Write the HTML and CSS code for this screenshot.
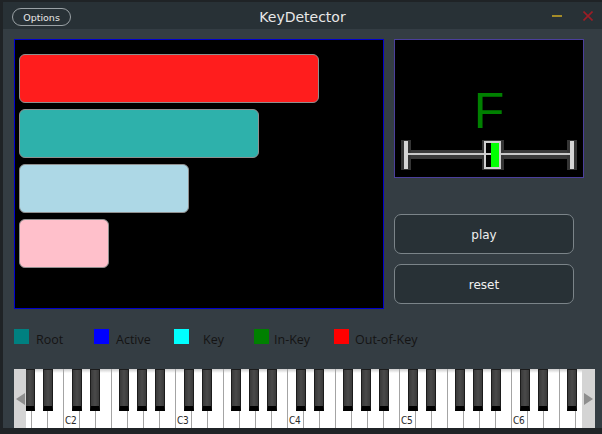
FILE: index.html
```html
<!DOCTYPE html>
<html>
<head>
<meta charset="utf-8">
<title>KeyDetector</title>
<link rel="stylesheet" href="styles.css">
</head>
<body>
<div class="window">
  <div class="titlebar">
    <div class="opt">Options</div>
    <div class="title">KeyDetector</div>
    <div class="wctl">
      <span class="min"></span>
      <svg class="close" width="10" height="10" viewBox="0 0 10 10"><path d="M0.5 0.5L9.5 9.5M9.5 0.5L0.5 9.5" stroke="#9c1d26" stroke-width="1.6" fill="none"/></svg>
    </div>
  </div>
  <div class="main">
    <div class="top">
      <div class="bars">
        <div class="bar red" style="width:300px"></div>
        <div class="bar teal" style="width:240px"></div>
        <div class="bar lblue" style="width:170px"></div>
        <div class="bar pink" style="width:90px"></div>
      </div>
      <div class="side">
        <div class="note">
          <div class="letter">F</div>
          <svg class="slider" width="188" height="30" viewBox="0 0 188 30">
            <rect x="13" y="10" width="162" height="9" fill="#3a3a3a"/>
            <rect x="6" y="0" width="10" height="30" fill="#353535"/>
            <rect x="172" y="0" width="10" height="30" fill="#353535"/>
            <rect x="87" y="0" width="22" height="30" fill="#353535"/>
            <rect x="91" y="3" width="13" height="24" fill="#000"/>
            <rect x="13" y="13" width="162" height="2" fill="#c8c8c8"/>
            <rect x="9" y="1" width="4" height="28" fill="#d6d6d6"/>
            <rect x="175" y="1" width="4" height="28" fill="#d6d6d6"/>
            <rect x="96" y="2" width="8" height="26" fill="#00ff00"/>
            <rect x="90" y="2" width="15" height="26" fill="none" stroke="#cfcfcf" stroke-width="2"/>
          </svg>
        </div>
        <div class="btn play">play</div>
        <div class="btn reset">reset</div>
      </div>
    </div>
    <div class="legend">
      <div class="item"><span class="sq root"></span><span class="lab">Root</span></div>
      <div class="item"><span class="sq active"></span><span class="lab">Active</span></div>
      <div class="item"><span class="sq key"></span><span class="lab lab-key">Key</span></div>
      <div class="item"><span class="sq inkey"></span><span class="lab lab-in">In-Key</span></div>
      <div class="item"><span class="sq outkey"></span><span class="lab lab-out">Out-of-Key</span></div>
    </div>
    <div class="kb">
      <div class="arr"><svg width="9" height="12" viewBox="0 0 9 12"><path d="M0 6L9 0V12Z" fill="#8e8e8e"/></svg></div>
      <div class="keys">
        <div class="keys-in">
          <div class="wk"><span class="bk g"></span></div>
          <div class="wk"><span class="bk a"></span></div>
          <div class="wk"></div>

          <div class="wk"><span class="bk c"></span><span class="lbl">C2</span></div>
          <div class="wk"><span class="bk d"></span></div>
          <div class="wk"></div>
          <div class="wk"><span class="bk f"></span></div>
          <div class="wk"><span class="bk g"></span></div>
          <div class="wk"><span class="bk a"></span></div>
          <div class="wk"></div>

          <div class="wk"><span class="bk c"></span><span class="lbl">C3</span></div>
          <div class="wk"><span class="bk d"></span></div>
          <div class="wk"></div>
          <div class="wk"><span class="bk f"></span></div>
          <div class="wk"><span class="bk g"></span></div>
          <div class="wk"><span class="bk a"></span></div>
          <div class="wk"></div>

          <div class="wk"><span class="bk c"></span><span class="lbl">C4</span></div>
          <div class="wk"><span class="bk d"></span></div>
          <div class="wk"></div>
          <div class="wk"><span class="bk f"></span></div>
          <div class="wk"><span class="bk g"></span></div>
          <div class="wk"><span class="bk a"></span></div>
          <div class="wk"></div>

          <div class="wk"><span class="bk c"></span><span class="lbl">C5</span></div>
          <div class="wk"><span class="bk d"></span></div>
          <div class="wk"></div>
          <div class="wk"><span class="bk f"></span></div>
          <div class="wk"><span class="bk g"></span></div>
          <div class="wk"><span class="bk a"></span></div>
          <div class="wk"></div>

          <div class="wk"><span class="bk c"></span><span class="lbl">C6</span></div>
          <div class="wk"><span class="bk d"></span></div>
          <div class="wk"></div>
          <div class="wk"><span class="bk f"></span></div>
          <div class="wk"><span class="bk g"></span></div>
        </div>
      </div>
      <div class="arr arr-r"><svg width="9" height="12" viewBox="0 0 9 12"><path d="M9 6L0 0V12Z" fill="#8e8e8e"/></svg></div>
    </div>
  </div>
</div>
</body>
</html>
```
FILE: styles.css
```css
html, body {
  margin: 0;
  padding: 0;
}
body {
  background: #1f2326;
  width: 602px;
  height: 434px;
  overflow: hidden;
}
.window {
  margin: 2px 0 0 3px;
  width: 599px;
  height: 426px;
  background: #343d43;
  display: flex;
  flex-direction: column;
}
.titlebar {
  height: 27px;
  box-sizing: border-box;
  padding-top: 3px;
  background: #283136;
  display: grid;
  grid-template-columns: 1fr auto 1fr;
  align-items: center;
}
.opt {
  justify-self: start;
  margin-left: 9px;
  width: 59px;
  height: 18px;
  box-sizing: border-box;
  border: 1px solid #9aa1a5;
  border-radius: 9px;
  color: #e8e8e8;
  font: 9.5px "DejaVu Sans", sans-serif;
  display: flex;
  align-items: center;
  justify-content: center;
}
.title {
  font: 14px "DejaVu Sans", sans-serif;
  color: #e8e8e8;
}
.wctl {
  justify-self: end;
  display: flex;
  align-items: center;
  gap: 21px;
  padding-right: 9px;
  margin-bottom: 2px;
}
.min {
  display: block;
  width: 10px;
  height: 2px;
  background: #a58c28;
}
.close {
  display: block;
}
.main {
  flex: 1;
  padding: 10px 0 0 11px;
  display: flex;
  flex-direction: column;
}
.top {
  display: flex;
  gap: 10px;
}
.bars {
  width: 370px;
  height: 270px;
  box-sizing: border-box;
  border: 1px solid #0000cc;
  background: #000;
  padding: 14px 0 0 4px;
  display: flex;
  flex-direction: column;
  gap: 6px;
}
.bar {
  height: 49px;
  box-sizing: border-box;
  border: 1px solid #8f8f8f;
  border-radius: 6px;
}
.red { background: #ff1d1d; }
.teal { background: #2eb1ab; }
.lblue { background: #add8e6; }
.pink { background: #ffc0cb; }
.side {
  width: 190px;
  display: flex;
  flex-direction: column;
}
.note {
  height: 139px;
  box-sizing: border-box;
  border: 1px solid #4b3f9c;
  background: #000;
  padding-top: 46px;
  display: flex;
  flex-direction: column;
  align-items: center;
}
.letter {
  font: 50px/50px "Liberation Sans", sans-serif;
  color: #008000;
}
.slider {
  display: block;
  margin-top: 4px;
}
.btn {
  width: 180px;
  height: 40px;
  box-sizing: border-box;
  border: 1px solid #7b8489;
  border-radius: 7px;
  background: #283136;
  color: #f0f0f0;
  font: 12px "DejaVu Sans", sans-serif;
  display: flex;
  align-items: center;
  justify-content: center;
  padding-top: 1px;
}
.play { margin-top: 36px; }
.reset { margin-top: 10px; }
.legend {
  display: flex;
  height: 15px;
  margin-top: 20px;
}
.item {
  width: 80px;
  flex: none;
  display: flex;
  align-items: flex-start;
}
.sq {
  width: 15px;
  height: 15px;
  flex: none;
}
.root { background: #008080; }
.active { background: #0000ff; }
.key { background: #00ffff; }
.inkey { background: #008000; }
.outkey { background: #ff0000; }
.lab {
  margin-left: 7px;
  margin-top: 3px;
  font: 12.5px/15px "Open Sans", sans-serif;
  color: #141414;
  white-space: nowrap;
}
.lab-key { margin-left: 14px; }
.lab-in { margin-left: 5px; }
.lab-out { margin-left: 6px; }
.kb {
  margin-top: 25px;
  height: 59px;
  width: 581px;
  display: flex;
}
.arr {
  width: 12px;
  flex: none;
  background: #d4d4d4;
  display: flex;
  align-items: center;
  justify-content: center;
}
.arr svg { display: block; }
.arr-r { width: 13px; }
.keys {
  width: 556px;
  flex: none;
  overflow: hidden;
  position: relative;
}
.keys-in {
  display: flex;
  height: 100%;
  margin-left: -11px;
}
.wk {
  width: 16px;
  flex: none;
  height: 100%;
  box-sizing: border-box;
  border-left: 1px solid #a4a4a4;
  background: linear-gradient(#cccccc, #ffffff 4px);
  position: relative;
}
.bk {
  position: absolute;
  top: 0;
  width: 10px;
  height: 42px;
  box-sizing: border-box;
  background: linear-gradient(90deg, #3a3a3a, #4a4a4a 50%, #3a3a3a);
  border: 1px solid #1c1c1c;
  border-bottom: 5px solid #000;
  z-index: 2;
}
.bk.c { left: 8px; }
.bk.d { left: 10px; }
.bk.f { left: 7px; }
.bk.g { left: 9px; }
.bk.a { left: 11px; }
.lbl {
  position: absolute;
  left: 1px;
  bottom: 2px;
  font: 10px/10px "DejaVu Sans Condensed", "DejaVu Sans", sans-serif;
  color: #2a2a2a;
  letter-spacing: -0.3px;
}
```
